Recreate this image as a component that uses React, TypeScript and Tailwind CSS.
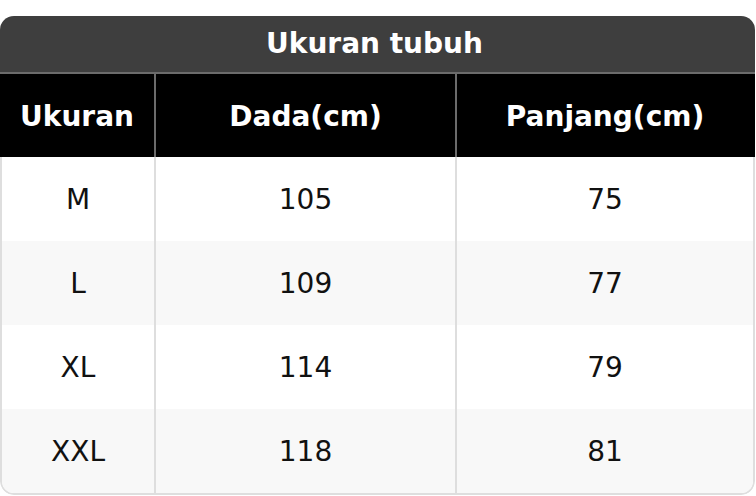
const rows = [
  ["M", "105", "75"],
  ["L", "109", "77"],
  ["XL", "114", "79"],
  ["XXL", "118", "81"],
];

export default function App() {
  return (
    <div className="bg-white w-[756px] h-[496px] pt-[16px]" style={{ fontFamily: '"DejaVu Sans", sans-serif' }}>
      <div className="w-[755px] rounded-[14px] overflow-hidden">
        <div className="h-[56px] bg-[#3e3e3e] flex items-center justify-center pr-[6px] text-white font-bold text-[28px]">
          Ukuran tubuh
        </div>
        <div className="h-[2px] bg-[#6b6b6b]" />
        <div className="grid grid-cols-[154px_2px_299px_2px_298px] h-[83px] bg-black text-white font-bold text-[28px]">
          <div className="flex items-center justify-center pt-[2px]">Ukuran</div>
          <div className="bg-[#6b6b6b]" />
          <div className="flex items-center justify-center pt-[2px]">Dada(cm)</div>
          <div className="bg-[#6b6b6b]" />
          <div className="flex items-center justify-center pt-[2px] pr-[2px]">Panjang(cm)</div>
        </div>
        <div className="border-x-2 border-b-2 border-[#dedede] rounded-b-[14px] overflow-hidden">
          {rows.map((r, i) => (
            <div
              key={r[0]}
              className={`grid grid-cols-[152px_2px_299px_2px_296px] h-[84px] text-[28px] text-[#111] ${i % 2 === 1 ? "bg-[#f8f8f8]" : "bg-white"}`}
            >
              <div className="flex items-center justify-center pt-[2px]">{r[0]}</div>
              <div className="bg-[#dedede]" />
              <div className="flex items-center justify-center pt-[2px]">{r[1]}</div>
              <div className="bg-[#dedede]" />
              <div className="flex items-center justify-center pt-[2px]">{r[2]}</div>
            </div>
          ))}
        </div>
      </div>
    </div>
  );
}
